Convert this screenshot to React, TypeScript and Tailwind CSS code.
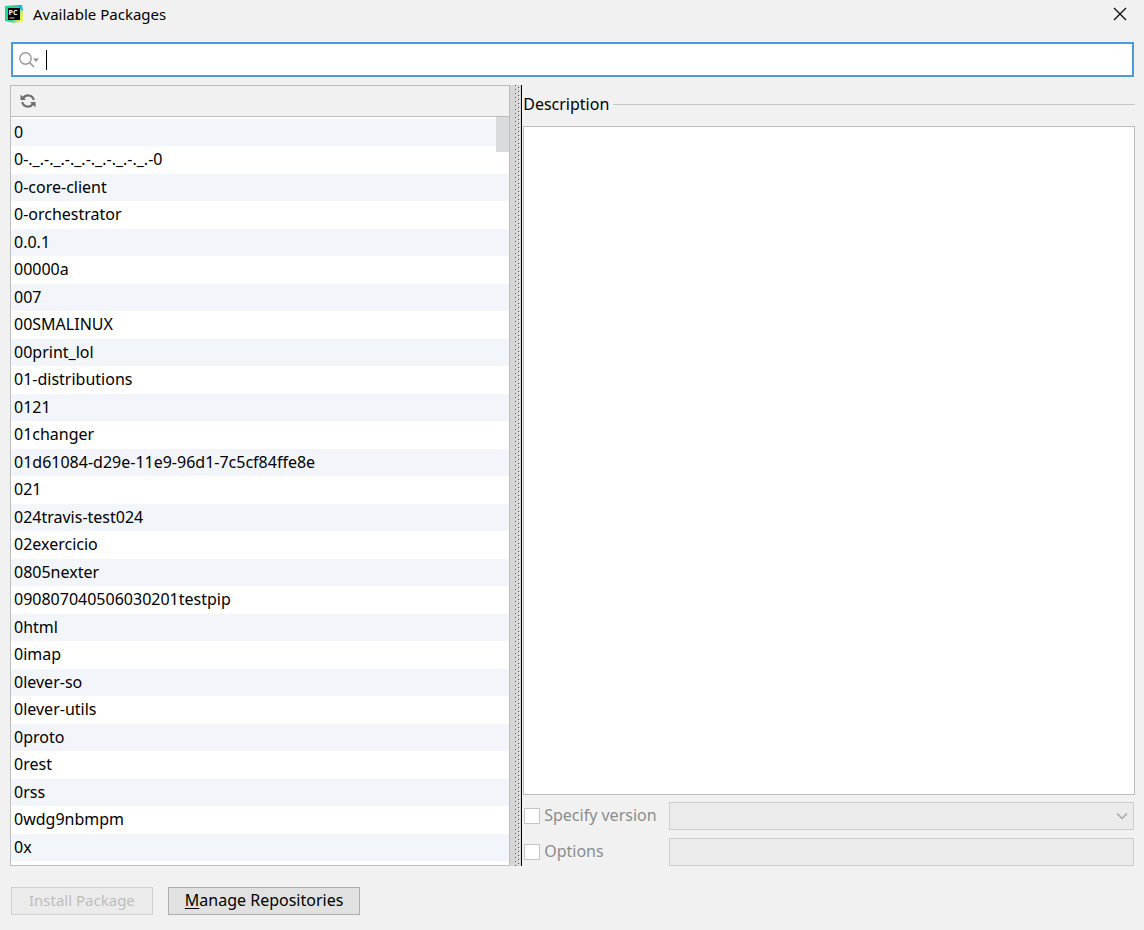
import React, { useState } from 'react';

const packages = [
    '0',
    '0-._.-._.-._.-._.-._.-._.-0',
    '0-core-client',
    '0-orchestrator',
    '0.0.1',
    '00000a',
    '007',
    '00SMALINUX',
    '00print_lol',
    '01-distributions',
    '0121',
    '01changer',
    '01d61084-d29e-11e9-96d1-7c5cf84ffe8e',
    '021',
    '024travis-test024',
    '02exercicio',
    '0805nexter',
    '090807040506030201testpip',
    '0html',
    '0imap',
    '0lever-so',
    '0lever-utils',
    '0proto',
    '0rest',
    '0rss',
    '0wdg9nbmpm',
    '0x',
];

const AppLogo: React.FC = () => (
    <svg className="h-[18px] w-[18px]" viewBox="0 0 18 18" aria-hidden="true">
        <defs>
            <linearGradient id="logo" x1="0" y1="0.3" x2="1" y2="0.7">
                <stop offset="0.1" stopColor="#21d789" />
                <stop offset="0.5" stopColor="#3fd0a0" />
                <stop offset="0.9" stopColor="#e9f05a" />
            </linearGradient>
        </defs>
        <path d="M0 1l11-1 7 4v13l-9 1-9-2z" fill="url(#logo)" />
        <path d="M11 0h6l1 6-4-3z" fill="#16b6e8" />
        <rect x="3" y="3" width="12" height="12" fill="#000" />
        <text x="3.6" y="9.5" fontSize="7" fontWeight="700" fill="#fff" fontFamily="Open Sans, sans-serif">PC</text>
        <rect x="4.5" y="12.5" width="5" height="1" fill="#ccc" />
    </svg>
);

const SearchIcon: React.FC = () => (
    <svg className="h-5 w-5" viewBox="0 0 20 20" fill="none" aria-hidden="true">
        <circle cx="6.5" cy="8.5" r="5.7" stroke="#999" strokeWidth="1.4" />
        <path d="M10.5 12.5l4.5 4.5" stroke="#999" strokeWidth="1.7" />
        <path d="M14 8.5h6l-3 3.5z" fill="#8f8f8f" />
    </svg>
);

const RefreshIcon: React.FC = () => (
    <svg className="h-4 w-4" viewBox="0 0 16 16" fill="none" aria-hidden="true">
        <path d="M3 5.5A5.8 5.8 0 0 1 13.8 7" stroke="#6e6e6e" strokeWidth="2.2" />
        <path d="M13 10.5A5.8 5.8 0 0 1 2.2 9" stroke="#6e6e6e" strokeWidth="2.2" />
        <path d="M0.5 1.5V7H6z" fill="#6e6e6e" />
        <path d="M15.5 14.5V9H10z" fill="#6e6e6e" />
    </svg>
);

const PackageList: React.FC = () => (
    <section className="flex min-w-0 flex-[500_1_0%] flex-col border border-[#bdbdbd] bg-white">
        <div className="flex h-[31px] items-center border-b border-[#bdbdbd] bg-[#f1f1f1] px-[9px]">
            <button type="button" aria-label="Reload list">
                <RefreshIcon />
            </button>
        </div>
        <div className="relative pt-0.5 pb-1">
            <ul>
                {packages.map((name) => (
                    <li key={name} className="flex h-7 items-center px-[3px] pb-0.5 odd:h-[27px] odd:bg-[#f2f5fa]">
                        {name}
                    </li>
                ))}
            </ul>
            {/* scrollbar thumb */}
            <div className="absolute top-0 right-0 h-[35px] w-[13px] bg-[#dadbdd]" />
        </div>
    </section>
);

const Splitter: React.FC = () => (
    <div className="w-3 border-r border-black bg-[#d6d6d6]">
        <svg className="h-full w-full" aria-hidden="true">
            <defs>
                <pattern id="grip" width="12" height="4" patternUnits="userSpaceOnUse">
                    <rect x="5" y="0" width="1" height="1" fill="#555" />
                    <rect x="6" y="1" width="1" height="1" fill="#f4f4f4" />
                    <rect x="8" y="2" width="1" height="1" fill="#555" />
                    <rect x="9" y="3" width="1" height="1" fill="#f4f4f4" />
                </pattern>
            </defs>
            <rect width="100%" height="100%" fill="url(#grip)" />
        </svg>
    </div>
);

const checkboxStyle = 'h-4 w-4 shrink-0 appearance-none border border-[#c6c6c6] bg-white';
const fieldStyle = 'h-7 w-full appearance-none border border-[#cfcfcf] bg-[#ebebeb]';

const DetailsPane: React.FC = () => (
    <section className="flex min-w-0 flex-[614_1_0%] flex-col pl-px">
        <div className="flex h-[41px] items-center gap-1 pb-[3px]">
            <h2>Description</h2>
            <div className="h-px flex-1 bg-[#c6c6c6]" />
        </div>
        <div className="flex-1 border border-[#bdbdbd] bg-white" />
        <div className="grid grid-cols-[146px_1fr] items-center gap-y-2 pt-[7px] pr-px text-[#8c8c8c]">
            <label className="flex items-center gap-1 pl-px">
                <input type="checkbox" disabled className={checkboxStyle} />
                <span className="pb-0.5">Specify version</span>
            </label>
            <div className="relative">
                <select disabled aria-label="Version" className={fieldStyle} />
                <svg className="absolute top-2 right-1.5 h-3 w-3" viewBox="0 0 12 12" fill="none" aria-hidden="true">
                    <path d="M1 3.5l5 5 5-5" stroke="#a8a8a8" strokeWidth="1.5" />
                </svg>
            </div>
            <label className="flex items-center gap-1 pl-px">
                <input type="checkbox" disabled className={checkboxStyle} />
                <span className="pb-0.5">Options</span>
            </label>
            <input type="text" disabled aria-label="Options value" className={fieldStyle} />
        </div>
    </section>
);

const App: React.FC = () => {
    const [query, setQuery] = useState('');

    return (
        <main className="flex min-h-screen flex-col bg-[#f1f1f1] font-['Noto_Sans',sans-serif] text-[16px] leading-5 text-black">
            <header className="flex h-[29px] items-center gap-2.5 pr-[17px] pb-px pl-[5px]">
                <AppLogo />
                <h1 className="flex-1 text-[15px]">Available Packages</h1>
                <button type="button" aria-label="Close">
                    <svg className="h-[14px] w-[14px]" viewBox="0 0 14 14" aria-hidden="true">
                        <path d="M1 1l12 12M13 1L1 13" stroke="#111" strokeWidth="1.4" />
                    </svg>
                </button>
            </header>

            <label className="mx-[11px] mt-[13px] mr-[10px] flex h-[35px] items-center gap-[7px] border-2 border-[#4a9bd9] bg-white pl-1.5">
                <SearchIcon />
                <input
                    type="text"
                    autoFocus
                    aria-label="Search packages"
                    value={query}
                    onChange={(e) => setQuery(e.target.value)}
                    className="h-5 flex-1 border-l border-black outline-none"
                />
            </label>

            <div className="mt-2 mr-[9px] ml-2.5 flex">
                <PackageList />
                <Splitter />
                <DetailsPane />
            </div>

            <footer className="flex gap-[15px] px-[11px] pt-[21px]">
                <button type="button" disabled className="h-7 border border-[#d0d0d0] bg-[#ebebeb] px-[17px] pb-0.5 text-[15px] text-[#bdbdbd]">
                    Install Package
                </button>
                <button type="button" className="h-7 border border-[#adadad] bg-[#e1e1e1] px-4 pb-0.5">
                    <span className="underline underline-offset-2">M</span>anage Repositories
                </button>
            </footer>
        </main>
    );
};

export default App;
